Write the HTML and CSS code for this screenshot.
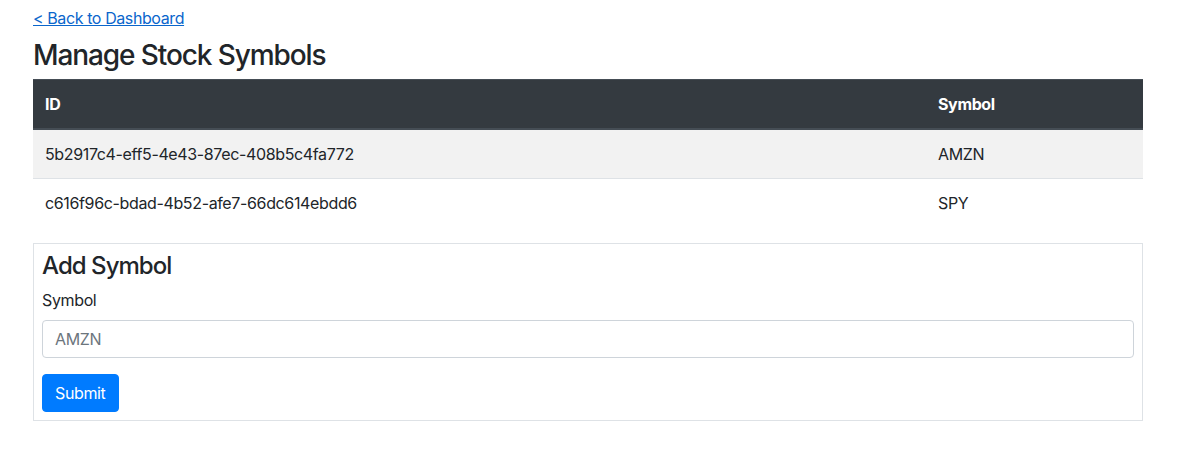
FILE: index.html
```html
<!DOCTYPE html>
<html>
<head>
<meta charset="utf-8">
<link rel="stylesheet" href="styles.css">
</head>
<body>
<div class="container">
  <a class="back" href="#">&lt; Back to Dashboard</a>
  <h3 class="title">Manage Stock Symbols</h3>
  <table class="table">
    <thead>
      <tr><th class="col-id">ID</th><th>Symbol</th></tr>
    </thead>
    <tbody>
      <tr class="odd"><td>5b2917c4-eff5-4e43-87ec-408b5c4fa772</td><td>AMZN</td></tr>
      <tr><td>c616f96c-bdad-4b52-afe7-66dc614ebdd6</td><td>SPY</td></tr>
    </tbody>
  </table>
  <div class="card">
    <h4 class="card-title">Add Symbol</h4>
    <form class="form">
      <div class="form-group">
        <label class="label" for="sym">Symbol</label>
        <input class="input" id="sym" type="text" placeholder="AMZN">
      </div>
      <button class="btn" type="button">Submit</button>
    </form>
  </div>
</div>
</body>
</html>
```

FILE: styles.css
```css
* { box-sizing: border-box; }
body {
  margin: 0;
  font-family: Inter, "Noto Sans", "Liberation Sans", sans-serif;
  font-size: 16px;
  line-height: 1.5;
  letter-spacing: -0.36px;
  color: #212529;
  background: #fff;
}
.container {
  width: 1110px;
  margin-left: 33px;
  padding-top: 6px;
}
.back {
  display: block;
  color: #0a66cc;
  text-decoration: underline;
  line-height: 24px;
  width: max-content;
  letter-spacing: -0.4px;
}
.title {
  font-size: 28px;
  font-weight: 500;
  line-height: 1.2;
  letter-spacing: -1.1px;
  margin: 9px 0 6px;
}
.table {
  width: 100%;
  border-collapse: collapse;
  margin-bottom: 16px;
}
.table th, .table td {
  padding: 12px;
  text-align: left;
  vertical-align: top;
  border-top: 1px solid #dee2e6;
}
.table thead th {
  background: #343a40;
  color: #fff;
  font-weight: 700;
  border-top-color: #454d55;
  border-bottom: 2px solid #454d55;
}
.col-id { width: 893px; }
.table tr.odd td { background: #f2f2f2; }
.card {
  border: 1px solid #dee2e6;
  padding: 8px;
}
.card-title {
  font-size: 24px;
  font-weight: 500;
  line-height: 1.2;
  letter-spacing: -0.95px;
  margin: 0 0 8px;
}
.form { margin: 0; }
.form-group { margin-bottom: 16px; }
.label {
  display: block;
  margin-bottom: 8px;
}
.input {
  display: block;
  width: 100%;
  height: 38px;
  padding: 6px 12px;
  font: inherit;
  letter-spacing: inherit;
  color: #495057;
  border: 1px solid #ced4da;
  border-radius: 4px;
  background: #fff;
}
.input::placeholder { color: #6c757d; }
.btn {
  display: inline-block;
  height: 38px;
  padding: 6px 12px;
  font: inherit;
  letter-spacing: inherit;
  color: #fff;
  background: #007bff;
  border: 1px solid #007bff;
  border-radius: 4px;
  cursor: pointer;
}
```
